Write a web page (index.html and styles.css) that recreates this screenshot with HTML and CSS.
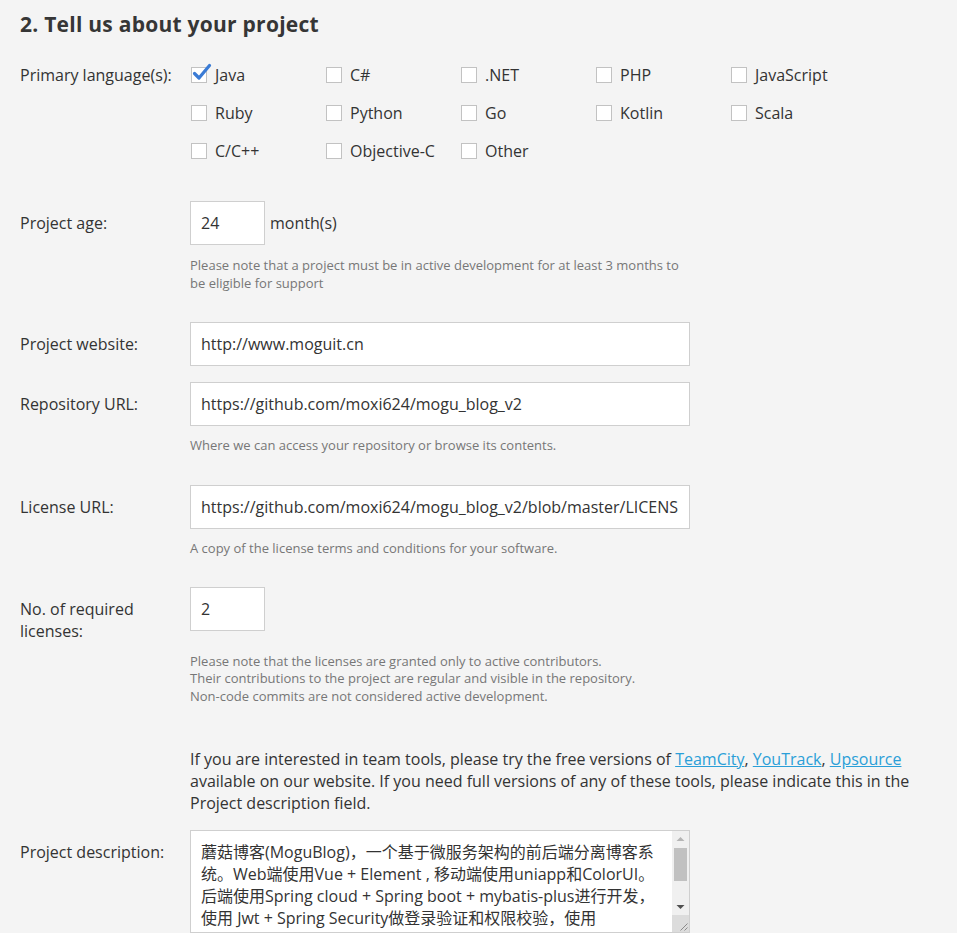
FILE: index.html
```html
<!DOCTYPE html>
<html lang="en">
<head>
<meta charset="utf-8">
<title>Tell us about your project</title>
<link rel="stylesheet" href="styles.css">
</head>
<body>
<div class="page">
  <h2 class="title">2. Tell us about your project</h2>

  <div class="group group-langs">
    <div class="label label-langs">Primary language(s):</div>
    <div class="langs">
      <label class="lang"><span class="box checked"><svg class="tick" viewBox="0 0 20 20" width="20" height="20"><path d="M2.5 10.5 L7 15 L17.5 2.5" fill="none" stroke="#3a7bd5" stroke-width="3.2" stroke-linecap="round" stroke-linejoin="round"/></svg></span>Java</label>
      <label class="lang"><span class="box"></span>C#</label>
      <label class="lang"><span class="box"></span>.NET</label>
      <label class="lang"><span class="box"></span>PHP</label>
      <label class="lang"><span class="box"></span>JavaScript</label>
      <label class="lang"><span class="box"></span>Ruby</label>
      <label class="lang"><span class="box"></span>Python</label>
      <label class="lang"><span class="box"></span>Go</label>
      <label class="lang"><span class="box"></span>Kotlin</label>
      <label class="lang"><span class="box"></span>Scala</label>
      <label class="lang"><span class="box"></span>C/C++</label>
      <label class="lang"><span class="box"></span>Objective-C</label>
      <label class="lang"><span class="box"></span>Other</label>
    </div>
  </div>

  <div class="group group-age">
    <div class="label">Project age:</div>
    <div class="field field-inline">
      <input class="input input-short" type="text" value="24">
      <span class="unit">month(s)</span>
    </div>
    <p class="note note-age">Please note that a project must be in active development for at least 3 months to be eligible for support</p>
  </div>

  <div class="group group-website">
    <div class="label">Project website:</div>
    <div class="field"><input class="input input-wide" type="text" value="http://www.moguit.cn"></div>
  </div>

  <div class="group group-repo">
    <div class="label">Repository URL:</div>
    <div class="field"><input class="input input-wide" type="text" value="https://github.com/moxi624/mogu_blog_v2"></div>
    <p class="note">Where we can access your repository or browse its contents.</p>
  </div>

  <div class="group group-license">
    <div class="label">License URL:</div>
    <div class="field"><input class="input input-wide" type="text" value="https://github.com/moxi624/mogu_blog_v2/blob/master/LICENSE"></div>
    <p class="note">A copy of the license terms and conditions for your software.</p>
  </div>

  <div class="group group-count">
    <div class="label label-narrow">No. of required licenses:</div>
    <div class="field"><input class="input input-short" type="text" value="2"></div>
    <p class="note">Please note that the licenses are granted only to active contributors.<br>Their contributions to the project are regular and visible in the repository.<br>Non-code commits are not considered active development.</p>
  </div>

  <div class="group group-info">
    <p class="info">If you are interested in team tools, please try the free versions of <a href="#">TeamCity</a>, <a href="#">YouTrack</a>, <a href="#">Upsource</a> available on our website. If you need full versions of any of these tools, please indicate this in the Project description field.</p>
  </div>

  <div class="group group-desc">
    <div class="label">Project description:</div>
    <div class="field ta-wrap">
      <textarea class="textarea">蘑菇博客(MoguBlog)，一个基于微服务架构的前后端分离博客系统。Web端使用Vue + Element , 移动端使用uniapp和ColorUI。后端使用Spring cloud + Spring boot + mybatis-plus进行开发，使用 Jwt + Spring Security做登录验证和权限校验，使用ElasticSearch和Solr作为全文检索服务，使用Github Actions完成博客的持续集成，使用ElasticStack搭建ELK日志收集，使用Minio作为本地对象存储服务，使用Zipkin链路追踪，使用Nacos作为服务注册和配置中心，使用Sentinel作为熔断和限流组件。</textarea>
      <div class="vscroll" aria-hidden="true">
        <div class="sb-btn"><svg width="17" height="17" viewBox="0 0 17 17"><path d="M4.5 10 L8.5 6 L12.5 10 Z" fill="#b5b5b5"/></svg></div>
        <div class="sb-track"><div class="sb-thumb"></div></div>
        <div class="sb-btn"><svg width="17" height="17" viewBox="0 0 17 17"><path d="M4.5 7 L8.5 11 L12.5 7 Z" fill="#505050"/></svg></div>
        <div class="sb-corner"><svg width="17" height="17" viewBox="0 0 17 17"><path d="M15.5 8.5 L8.5 15.5 M15.5 12.5 L12.5 15.5" stroke="#8a8a8a" stroke-width="1"/></svg></div>
      </div>
    </div>
  </div>
</div>
</body>
</html>
```

FILE: styles.css
```css
* { box-sizing: border-box; }

html, body {
  margin: 0;
  padding: 0;
  background: #f4f4f4;
}

body {
  font-family: "Open Sans", "Noto Sans CJK SC", sans-serif;
  font-size: 16px;
  color: #333;
}

.page {
  padding: 12px 20px 0 20px;
}

.title {
  margin: 0;
  font-family: "Open Sans", sans-serif;
  font-weight: 700;
  font-size: 21px;
  letter-spacing: 0.25px;
  line-height: 24px;
  color: #363636;
}

.group {
  display: grid;
  grid-template-columns: 170px 1fr;
  align-items: start;
}

.label {
  padding-top: 11px;
  line-height: 22px;
}

.label-narrow {
  width: 130px;
}

.label-langs {
  padding-top: 0;
  line-height: 38px;
}

.group-langs { margin-top: 20px; }
.group-age { margin-top: 31px; }
.group-website { margin-top: 30px; }
.group-repo { margin-top: 16px; }
.group-license { margin-top: 30px; }
.group-count { margin-top: 29.5px; }
.group-info { margin-top: 42.5px; }
.group-desc { margin-top: 16px; }

.langs {
  display: grid;
  grid-template-columns: repeat(5, 135px);
  grid-auto-rows: 38px;
}

.lang {
  display: flex;
  align-items: center;
  gap: 8px;
  padding-left: 1px;
  line-height: 38px;
}

.box {
  position: relative;
  flex: 0 0 auto;
  width: 16px;
  height: 16px;
  background: #fff;
  border: 1px solid #c2c2c2;
}

.tick {
  position: absolute;
  left: 0px;
  top: -5px;
}

.field {
  grid-column: 2;
}

.field-inline {
  display: flex;
  align-items: center;
  gap: 5px;
}

.input {
  height: 44px;
  padding: 0 10px;
  border: 1px solid #cfcfcf;
  background: #fff;
  font-family: "Open Sans", sans-serif;
  font-size: 16px;
  color: #333;
  outline: none;
}

.input-short { width: 75px; }
.input-wide { width: 500px; }

.unit {
  line-height: 22px;
}

.note {
  grid-column: 2;
  margin: 11px 0 0 0;
  font-size: 13px;
  line-height: 17.5px;
  color: #777;
  width: 500px;
}

.note-age {
  margin-top: 12px;
}

.info {
  grid-column: 2;
  margin: 0;
  line-height: 22px;
  color: #333;
}

.info a {
  color: #2a9fd8;
  text-decoration: underline;
}

.ta-wrap {
  position: relative;
  width: 500px;
}

.textarea {
  display: block;
  width: 500px;
  height: 103px;
  padding: 10px 27px 10px 10px;
  border: 1px solid #cfcfcf;
  background: #fff;
  font-family: "Open Sans", "Noto Sans CJK SC", sans-serif;
  font-size: 16px;
  line-height: 22px;
  color: #333;
  resize: none;
  overflow: hidden;
  outline: none;
}

.vscroll {
  position: absolute;
  top: 1px;
  right: 1px;
  bottom: 1px;
  width: 17px;
  display: flex;
  flex-direction: column;
  background: #f0f0f0;
}

.sb-btn {
  height: 17px;
  flex: 0 0 17px;
}

.sb-btn svg,
.sb-corner svg {
  display: block;
}

.sb-track {
  flex: 1 1 auto;
  padding: 0 2px;
}

.sb-thumb {
  height: 33px;
  background: #c1c1c1;
}

.sb-corner {
  height: 17px;
  flex: 0 0 17px;
  background: #dcdcdc;
}
```
